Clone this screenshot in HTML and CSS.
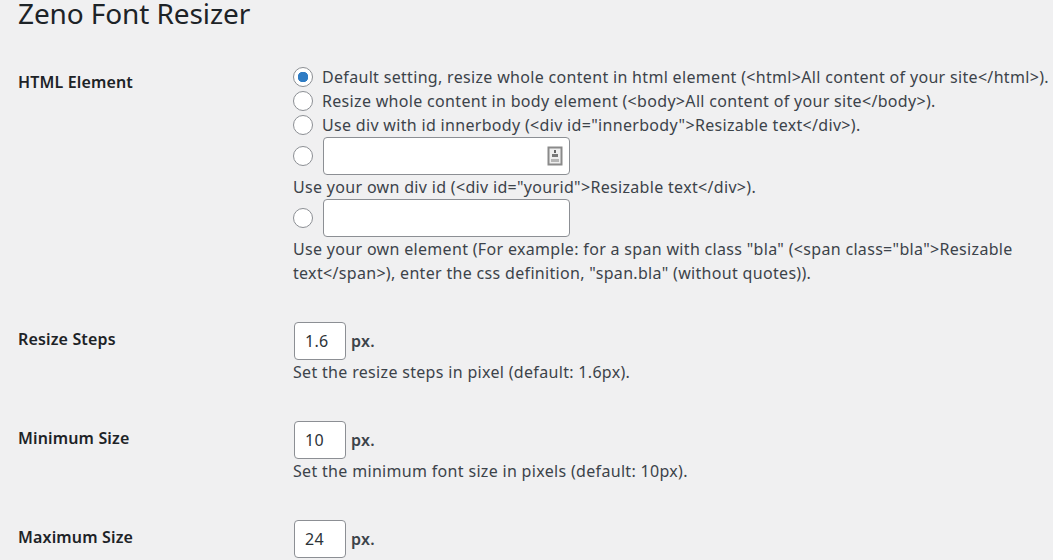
FILE: index.html
```html
<!DOCTYPE html>
<html lang="en">
<head>
    <meta charset="UTF-8">
    <meta name="viewport" content="width=device-width, initial-scale=1.0">
    <title>Zeno Font Resizer</title>
    <link rel="stylesheet" href="styles.css">
</head>
<body>
    <div class="wrap">
        <h1>Zeno Font Resizer</h1>
        <form class="settings">
            <div class="row">
                <div class="row-label">HTML Element</div>
                <div class="row-field">
                    <label class="choice"><input type="radio" name="element" checked><span>Default setting, resize whole content in html element (&lt;html&gt;All content of your site&lt;/html&gt;).</span></label>
                    <label class="choice"><input type="radio" name="element"><span>Resize whole content in body element (&lt;body&gt;All content of your site&lt;/body&gt;).</span></label>
                    <label class="choice"><input type="radio" name="element"><span>Use div with id innerbody (&lt;div id="innerbody"&gt;Resizable text&lt;/div&gt;).</span></label>
                    <div class="choice choice-input">
                        <input type="radio" name="element">
                        <span class="text-box">
                            <svg class="key-icon" width="16" height="20" viewBox="0 0 16 20"><rect x="1.5" y="1.5" width="13" height="17" fill="#eee" stroke="#8a8a8a" stroke-width="2"/><path d="M7 4h2v3H7z" fill="#666"/><path d="M5 8h6v3H5z" fill="#777"/><path d="M4 13h8v3H4z" fill="#b5b5b5"/></svg>
                        </span>
                    </div>
                    <p class="note">Use your own div id (&lt;div id="yourid"&gt;Resizable text&lt;/div&gt;).</p>
                    <div class="choice choice-input">
                        <input type="radio" name="element">
                        <span class="text-box"></span>
                    </div>
                    <p class="note">Use your own element (For example: for a span with class "bla" (&lt;span class="bla"&gt;Resizable text&lt;/span&gt;), enter the css definition, "span.bla" (without quotes)).</p>
                </div>
            </div>

            <div class="row">
                <div class="row-label">Resize Steps</div>
                <div class="row-field">
                    <div class="size-line"><span class="num-box">1.6</span><b>px.</b></div>
                    <p class="note">Set the resize steps in pixel (default: 1.6px).</p>
                </div>
            </div>

            <div class="row">
                <div class="row-label">Minimum Size</div>
                <div class="row-field">
                    <div class="size-line"><span class="num-box">10</span><b>px.</b></div>
                    <p class="note">Set the minimum font size in pixels (default: 10px).</p>
                </div>
            </div>

            <div class="row">
                <div class="row-label">Maximum Size</div>
                <div class="row-field">
                    <div class="size-line"><span class="num-box">24</span><b>px.</b></div>
                </div>
            </div>
        </form>
    </div>
</body>
</html>
```

FILE: styles.css
```css
html, body {
    height: 100%;
    overflow: hidden;
}

body {
    margin: 0;
    background: #f0f0f1;
    color: #3c434a;
    font-family: "Noto Sans", sans-serif;
    font-size: 16px;
    line-height: 24px;
    letter-spacing: 0.32px;
}

.wrap {
    padding-left: 18px;
}

h1 {
    margin: 0;
    padding-bottom: 39px;
    color: #1d2327;
    font-size: 28px;
    font-weight: 400;
    line-height: 26px;
    letter-spacing: -0.1px;
}

.row {
    display: flex;
    padding-bottom: 37px;
}

.row:last-child {
    padding-bottom: 0;
}

.row-label {
    width: 275px;
    flex: none;
    padding-top: 5px;
    color: #1d2327;
    font-weight: 600;
    letter-spacing: 0.15px;
}

.row-field {
    flex: 1;
    padding-right: 4px;
}

.choice {
    display: flex;
    align-items: center;
    height: 24px;
}

.choice input[type="radio"] {
    appearance: none;
    width: 20px;
    height: 20px;
    margin: 0 9px 0 0;
    flex: none;
    border: 1px solid #8c8f94;
    border-radius: 50%;
    background: #fff;
}

.choice input[type="radio"]:checked {
    background: radial-gradient(circle, #2f7cc4 0 5px, #fff 5.5px);
}

.choice-input {
    height: 38px;
}

.text-box {
    display: flex;
    align-items: center;
    justify-content: flex-end;
    width: 247px;
    height: 38px;
    margin-left: 1px;
    padding-right: 6px;
    box-sizing: border-box;
    border: 1px solid #8c8f94;
    border-radius: 4px;
    background: #fff;
}

.note {
    margin: 0;
}

.size-line {
    display: flex;
    align-items: center;
    gap: 5px;
    margin-left: 1px;
}

.num-box {
    width: 52px;
    height: 38px;
    padding-left: 10px;
    box-sizing: border-box;
    border: 1px solid #8c8f94;
    border-radius: 4px;
    background: #fff;
    color: #2c3338;
    line-height: 36px;
}

.size-line b {
    font-weight: 600;
}
```
